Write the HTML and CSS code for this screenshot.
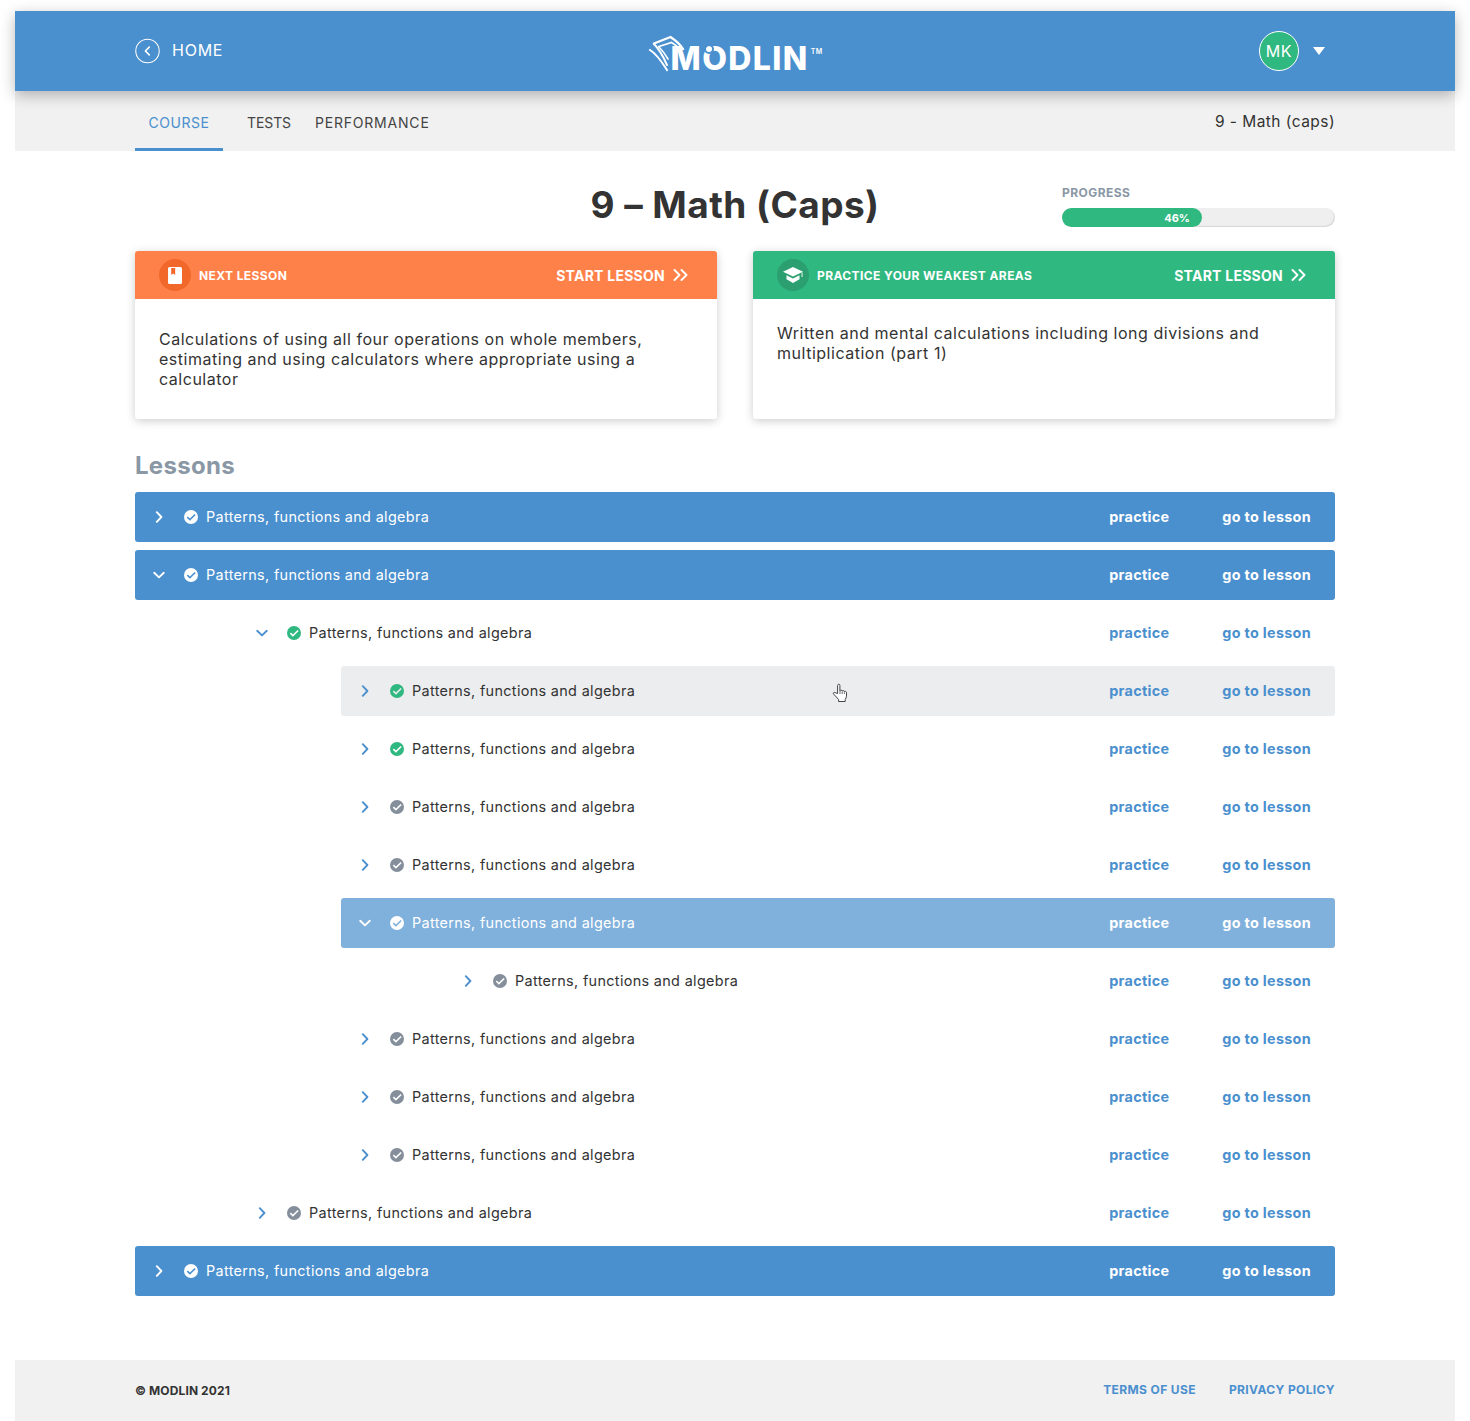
FILE: index.html
```html
<!DOCTYPE html>
<html lang="en">
<head>
<meta charset="utf-8">
<title>Modlin - 9 Math (Caps)</title>
<link rel="stylesheet" href="styles.css">
</head>
<body>
<svg class="defs" width="0" height="0" aria-hidden="true">
  <defs>
    <symbol id="right" viewBox="0 0 12 12"><path d="M3.800 1.200 8.400 6 3.800 10.800" fill="none" stroke="currentColor" stroke-width="1.900" stroke-linecap="round" stroke-linejoin="round"/></symbol>
    <symbol id="down" viewBox="0 0 12 12"><path d="M1.200 3.800 6 8.400l4.800-4.600" fill="none" stroke="currentColor" stroke-width="1.900" stroke-linecap="round" stroke-linejoin="round"/></symbol>
    <symbol id="check" viewBox="0 0 14 14"><path fill-rule="evenodd" d="M7 0a7 7 0 1 1 0 14A7 7 0 0 1 7 0Zm3.600 3.900L5.900 8.500 3.900 6.600 2.800 7.700l3.100 3.100 5.800-5.800-1.100-1.100Z" fill="currentColor"/></symbol>
    <symbol id="dbl" viewBox="0 0 16 12"><path d="M1.500 1 6.500 6l-5 5M8.500 1l5 5-5 5" fill="none" stroke="currentColor" stroke-width="1.900" stroke-linecap="round" stroke-linejoin="round"/></symbol>
  </defs>
</svg>
<div class="app">
  <header class="topbar">
    <a class="home">
      <svg class="home-icon" viewBox="0 0 26 26"><circle cx="13" cy="13" r="12.200" fill="none" stroke="#fff" stroke-width="1.100"/><path d="M14.800 9 10.800 13l4 4" fill="none" stroke="#fff" stroke-width="1.700" stroke-linecap="round" stroke-linejoin="round"/></svg>
      <span>HOME</span>
    </a>
    <div class="logo">
      <svg class="logo-mark" viewBox="0 0 38 37">
        <g fill="none" stroke="#fff" stroke-linecap="square">
          <path d="M7 8.500 23.500 2C28 5 33 9 36 14" stroke-width="2.200"/>
          <path d="M12 11.500 24.500 7.500C28 9.500 30.500 11.500 32.500 14" stroke-width="1.800"/>
          <path d="M7 9C12 14 16 21 20 30" stroke-width="1.900"/>
          <path d="M3 15C10 19 15 27 20 35" stroke-width="2"/>
          <path d="M12 12C15 15 18 19 21 24" stroke-width="1.600"/>
        </g>
      </svg>
      <span class="logo-text">M<span class="logo-o">O</span>DLIN</span><sup class="tm">TM</sup>
    </div>
    <div class="user">
      <span class="avatar">MK</span>
      <span class="caret"></span>
    </div>
  </header>

  <nav class="tabs">
    <a class="tab tab-active">COURSE</a>
    <a class="tab tab-tests">TESTS</a>
    <a class="tab tab-perf">PERFORMANCE</a>
    <span class="crumb">9 - Math (caps)</span>
  </nav>

  <main class="content">
    <section class="title-row">
      <div></div>
      <h1 class="title">9 – Math (Caps)</h1>
      <div class="progress">
        <div class="progress-label">PROGRESS</div>
        <div class="progress-track"><div class="progress-fill" style="width:51.3%">46%</div></div>
      </div>
    </section>

    <section class="cards">
      <article class="card">
        <div class="card-head head-orange">
          <span class="badge badge-orange">
            <svg viewBox="0 0 14 17" width="14" height="17"><path fill-rule="evenodd" d="M1.500 0h11A1.500 1.500 0 0 1 14 1.500v14a1.500 1.500 0 0 1-1.500 1.500h-11A1.500 1.500 0 0 1 0 15.500v-14A1.500 1.500 0 0 1 1.500 0Zm1.700 1v7l2-1.600 2 1.600V1h-4Z" fill="#fff"/></svg>
          </span>
          <span class="card-label">NEXT LESSON</span>
          <a class="card-start">START LESSON <svg class="dbl"><use href="#dbl"/></svg></a>
        </div>
        <p class="card-body body-low">Calculations of using all four operations on whole members, estimating and using calculators where appropriate using a calculator</p>
      </article>
      <article class="card">
        <div class="card-head head-green">
          <span class="badge badge-green">
            <svg viewBox="0 0 20 16" width="20" height="16"><path d="M10 0 20 4.800 10 9.600 0 4.800 10 0Z" fill="#fff"/><path d="M3.500 8.300 10 11.400l6.500-3.100v4L10 16l-6.500-3.700v-4Z" fill="#fff"/><path d="M18.600 5.500h.9V10h-.9z" fill="#fff"/></svg>
          </span>
          <span class="card-label">PRACTICE YOUR WEAKEST AREAS</span>
          <a class="card-start">START LESSON <svg class="dbl"><use href="#dbl"/></svg></a>
        </div>
        <p class="card-body">Written and mental calculations including long divisions and multiplication (part 1)</p>
      </article>
    </section>

    <h2 class="lessons-title">Lessons</h2>

    <section class="lessons">
      <div class="row row-primary"><svg class="chev"><use href="#right"/></svg><svg class="check"><use href="#check"/></svg><span class="row-name">Patterns, functions and algebra</span><a class="act act-practice">practice</a><a class="act">go to lesson</a></div>
      <div class="row row-primary"><svg class="chev"><use href="#down"/></svg><svg class="check"><use href="#check"/></svg><span class="row-name">Patterns, functions and algebra</span><a class="act act-practice">practice</a><a class="act">go to lesson</a></div>
      <div class="row lvl1"><svg class="chev"><use href="#down"/></svg><svg class="check done"><use href="#check"/></svg><span class="row-name">Patterns, functions and algebra</span><a class="act act-practice">practice</a><a class="act">go to lesson</a></div>
      <div class="row lvl2 row-hover"><svg class="chev"><use href="#right"/></svg><svg class="check done"><use href="#check"/></svg><span class="row-name">Patterns, functions and algebra</span><a class="act act-practice">practice</a><a class="act">go to lesson</a>
        <svg class="cursor" viewBox="0 0 16 20"><path d="M5.600 10.600V2.500c0-1.700 2.300-1.700 2.300 0v5.300c.3-1 2.100-1 2.200.3.500-.9 2-.7 2.100.5.600-.6 2.200-.4 2.300 1.100v3.500c0 1.300-.7 2.300-1.300 3.300v2H6.600v-2c-1.500-1.500-3-3.500-5-5.400-.9-1 .3-2.300 1.500-1.500l2.500 1Z" fill="#fff" stroke="#444" stroke-width="1" stroke-linejoin="round"/><path d="M8 8v3M10.200 8.500V11M12.400 9.300V11" stroke="#444" stroke-width=".8" fill="none"/></svg>
      </div>
      <div class="row lvl2"><svg class="chev"><use href="#right"/></svg><svg class="check done"><use href="#check"/></svg><span class="row-name">Patterns, functions and algebra</span><a class="act act-practice">practice</a><a class="act">go to lesson</a></div>
      <div class="row lvl2"><svg class="chev"><use href="#right"/></svg><svg class="check"><use href="#check"/></svg><span class="row-name">Patterns, functions and algebra</span><a class="act act-practice">practice</a><a class="act">go to lesson</a></div>
      <div class="row lvl2"><svg class="chev"><use href="#right"/></svg><svg class="check"><use href="#check"/></svg><span class="row-name">Patterns, functions and algebra</span><a class="act act-practice">practice</a><a class="act">go to lesson</a></div>
      <div class="row lvl2 row-light"><svg class="chev"><use href="#down"/></svg><svg class="check"><use href="#check"/></svg><span class="row-name">Patterns, functions and algebra</span><a class="act act-practice">practice</a><a class="act">go to lesson</a></div>
      <div class="row lvl3"><svg class="chev"><use href="#right"/></svg><svg class="check"><use href="#check"/></svg><span class="row-name">Patterns, functions and algebra</span><a class="act act-practice">practice</a><a class="act">go to lesson</a></div>
      <div class="row lvl2"><svg class="chev"><use href="#right"/></svg><svg class="check"><use href="#check"/></svg><span class="row-name">Patterns, functions and algebra</span><a class="act act-practice">practice</a><a class="act">go to lesson</a></div>
      <div class="row lvl2"><svg class="chev"><use href="#right"/></svg><svg class="check"><use href="#check"/></svg><span class="row-name">Patterns, functions and algebra</span><a class="act act-practice">practice</a><a class="act">go to lesson</a></div>
      <div class="row lvl2"><svg class="chev"><use href="#right"/></svg><svg class="check"><use href="#check"/></svg><span class="row-name">Patterns, functions and algebra</span><a class="act act-practice">practice</a><a class="act">go to lesson</a></div>
      <div class="row lvl1"><svg class="chev"><use href="#right"/></svg><svg class="check"><use href="#check"/></svg><span class="row-name">Patterns, functions and algebra</span><a class="act act-practice">practice</a><a class="act">go to lesson</a></div>
      <div class="row row-primary"><svg class="chev"><use href="#right"/></svg><svg class="check"><use href="#check"/></svg><span class="row-name">Patterns, functions and algebra</span><a class="act act-practice">practice</a><a class="act">go to lesson</a></div>
    </section>
  </main>

  <footer class="footer">
    <span class="copy">© MODLIN 2021</span>
    <a class="foot-link foot-terms">TERMS OF USE</a>
    <a class="foot-link">PRIVACY POLICY</a>
  </footer>
</div>
</body>
</html>
```

FILE: styles.css
```css
* { box-sizing: border-box; }
html, body { margin: 0; padding: 0; background: #fff; }
body {
  font-family: Inter, "Noto Sans", "Liberation Sans", sans-serif;
  color: #333;
  overflow-x: hidden;
}
.defs { position: absolute; }
.app { margin: 11px 15px 0; height: 1410px; display: flex; flex-direction: column; }

.topbar {
  position: relative;
  z-index: 2;
  height: 80px;
  background: #4a8fce;
  box-shadow: 0 4px 14px rgba(0,0,0,.28);
  display: grid;
  grid-template-columns: 1fr auto 1fr;
  align-items: center;
  padding: 0 120px;
  color: #fff;
}
.home { display: flex; align-items: center; gap: 12px; font-size: 16px; letter-spacing: .75px; }
.home span { margin-bottom: 2px; }
.home-icon { width: 25px; height: 26px; display: block; }
.logo { display: flex; align-items: flex-start; height: 37px; margin-top: 4px; margin-left: -1px; }
.logo-mark { width: 38px; height: 37px; margin-right: -14px; position: relative; z-index: 1; flex: none; }
.logo-text { font-size: 32px; font-weight: 800; line-height: 23px; letter-spacing: 1.4px; margin-top: 12px; }
.logo-o { position: relative; }
.logo-o::after {
  content: "";
  position: absolute;
  top: 7px;
  left: 4px;
  width: 6px;
  height: 6px;
  border-radius: 50%;
  background: #fff;
  outline: 2px solid #4a8fce;
}
.tm { font-size: 7px; font-weight: 600; line-height: 8px; margin: 13px 0 0 2px; letter-spacing: .3px; }
.user { justify-self: end; display: flex; align-items: center; gap: 14px; margin-right: 10px; }
.avatar {
  width: 40px;
  height: 40px;
  border-radius: 50%;
  background: #2fb880;
  border: 1px solid #fff;
  display: flex;
  align-items: center;
  justify-content: center;
  font-size: 16px;
  letter-spacing: .6px;
}
.caret { width: 0; height: 0; border-left: 6px solid transparent; border-right: 6px solid transparent; border-top: 8px solid #fff; }

.tabs {
  height: 60px;
  background: #f1f1f1;
  padding: 0 120px;
  display: flex;
  align-items: stretch;
  font-size: 14px;
  letter-spacing: .35px;
  color: #444;
}
.tab { display: flex; align-items: center; padding-top: 2px; }
.tab-active {
  width: 88px;
  justify-content: center;
  color: #4a8fce;
  border-bottom: 3px solid #4a8fce;
  padding-top: 5px;
  letter-spacing: .5px;
}
.tab-tests { margin-left: 24px; letter-spacing: -.1px; }
.tab-perf { margin-left: 24px; letter-spacing: .8px; }
.crumb { margin-left: auto; align-self: center; font-size: 15.500px; letter-spacing: .45px; color: #333; }

.content { flex: 1; padding: 0 120px; }
.title-row { height: 100px; display: grid; grid-template-columns: 1fr auto 1fr; align-items: start; }
.title { margin: 31px 0 0; font-size: 37px; line-height: 46px; font-weight: 700; letter-spacing: .45px; color: #333; }
.progress { width: 273px; justify-self: end; padding-top: 35px; }
.progress-label { font-size: 12px; line-height: 14px; font-weight: 700; color: #8a97a5; letter-spacing: .45px; }
.progress-track { margin-top: 8px; height: 19px; border-radius: 10px; background: #efefef; box-shadow: inset -1px -1px 1px rgba(0,0,0,.1); }
.progress-fill {
  height: 19px;
  border-radius: 10px;
  background: #2fb880;
  color: #fff;
  font-size: 11px;
  font-weight: 700;
  line-height: 21px;
  text-align: right;
  padding-right: 12px;
}

.cards { display: grid; grid-template-columns: 582px 582px; column-gap: 36px; }
.card { height: 168px; background: #fff; border-radius: 3px; box-shadow: 0 2px 10px rgba(0,0,0,.2); overflow: hidden; }
.card-head { height: 48px; display: flex; align-items: center; padding: 0 28px 0 24px; color: #fff; }
.head-orange { background: #ff814a; }
.head-green { background: #2fb880; }
.badge { width: 32px; height: 32px; border-radius: 50%; display: flex; align-items: center; justify-content: center; margin-right: 8px; flex: none; }
.badge-orange { background: #f2682b; }
.badge-green { background: #2b9f70; }
.card-label { font-size: 12px; font-weight: 700; letter-spacing: .4px; padding-top: 1px; }
.card-start { margin-left: auto; display: flex; align-items: center; gap: 8px; font-size: 14px; font-weight: 700; letter-spacing: .25px; }
.dbl { width: 16px; height: 12px; }
.card-body { margin: 0; padding: 24px 24px 0; font-size: 16px; line-height: 20px; letter-spacing: .52px; color: #333; }
.body-low { padding-top: 30px; }

.lessons-title { margin: 32px 0 11px; font-size: 24px; line-height: 30px; font-weight: 700; letter-spacing: .3px; color: #8a97a5; }
.lessons { display: flex; flex-direction: column; gap: 8px; }
.row {
  position: relative;
  height: 50px;
  display: flex;
  align-items: center;
  padding: 0 24px 0 18px;
  border-radius: 3px;
  font-size: 14.400px;
  letter-spacing: .34px;
  color: #333;
}
.lvl1 { margin-left: 103px; }
.lvl2 { margin-left: 206px; }
.lvl3 { margin-left: 309px; }
.chev { width: 12px; height: 12px; color: #4a8fce; margin-right: 19px; flex: none; }
.check { width: 14px; height: 14px; color: #858f9c; margin-right: 8px; flex: none; }
.done { color: #2fb880; }
.row-name { flex: 1; margin-bottom: 2px; }
.act { font-weight: 700; color: #4a8fce; letter-spacing: .3px; margin-bottom: 2px; }
.act-practice { margin-right: 53px; }
.row-hover { background: #ecedef; }
.row-primary { background: #4a8fce; color: #fff; }
.row-light { background: #80b0dc; color: #fff; }
.row-primary .chev, .row-primary .check, .row-primary .act,
.row-light .chev, .row-light .check, .row-light .act { color: #fff; }
.cursor { position: absolute; left: 491px; top: 17px; width: 16px; height: 20px; }

.footer {
  height: 61px;
  background: #f1f1f1;
  padding: 0 120px;
  display: flex;
  align-items: center;
  font-size: 12px;
  font-weight: 700;
  letter-spacing: .2px;
}
.copy { margin-right: auto; color: #333; letter-spacing: .12px; }
.foot-link { color: #4a8fce; letter-spacing: .38px; margin-bottom: 2px; }
.foot-terms { margin-right: 33px; }
```
